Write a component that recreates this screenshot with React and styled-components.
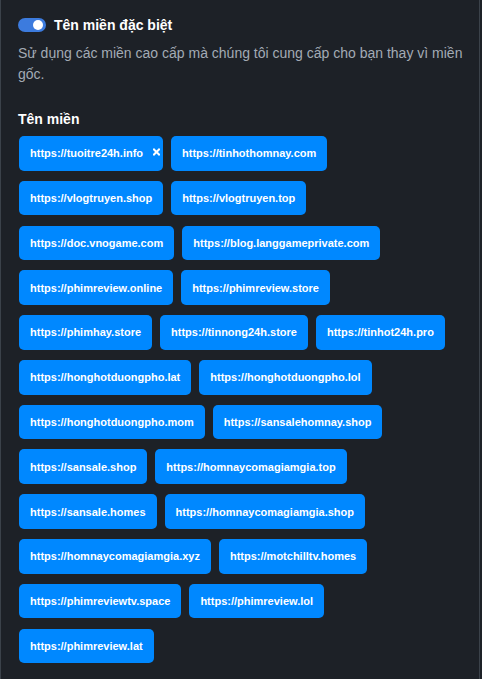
import styled, { createGlobalStyle } from 'styled-components';

const GlobalStyle = createGlobalStyle`
  html, body {
    margin: 0;
    padding: 0;
    background: #1d2127;
  }
  body {
    font-family: 'Liberation Sans', Arial, sans-serif;
  }
`;

const Panel = styled.section`
  box-sizing: border-box;
  width: 480px;
  min-height: 679px;
  padding: 16px 12px 20px 17px;
  background: #1d2127;
  border-left: 1px solid #3b424a;
  border-right: 1px solid #3b424a;
`;

const Header = styled.div`
  display: flex;
  align-items: center;
  gap: 8px;
  height: 18px;
`;

const Toggle = styled.span`
  position: relative;
  display: inline-block;
  width: 28px;
  height: 14px;
  border-radius: 7px;
  background: #3c7bde;
  &::after {
    content: '';
    position: absolute;
    top: 2px;
    right: 3px;
    width: 10px;
    height: 10px;
    border-radius: 50%;
    background: #fff;
  }
`;

const Title = styled.h3`
  margin: 0;
  font-size: 14px;
  font-weight: 700;
  color: #fff;
`;

const Description = styled.p`
  margin: 9px 0 0;
  font-size: 14px;
  line-height: 21px;
  color: #a3abb5;
`;

const Label = styled.h4`
  margin: 24px 0 0;
  font-size: 14px;
  font-weight: 700;
  line-height: 20px;
  color: #fff;
`;

const Chips = styled.div`
  display: flex;
  flex-wrap: wrap;
  gap: 10.2px 8px;
  margin-top: 7px;
  padding-left: 1px;
  max-width: 446px;
`;

const Chip = styled.span`
  position: relative;
  display: inline-flex;
  align-items: center;
  box-sizing: border-box;
  height: 34.6px;
  padding: 0 ${(p) => (p.$removable ? '20px' : '11px')} 0 11px;
  border-radius: 5px;
  background: #0088ff;
  color: #fff;
  font-size: 11px;
  font-weight: 700;
  white-space: nowrap;
`;

const Close = styled.svg`
  position: absolute;
  top: 12px;
  right: 3px;
  width: 7px;
  height: 8px;
`;

const domains = [
  'https://tuoitre24h.info',
  'https://tinhothomnay.com',
  'https://vlogtruyen.shop',
  'https://vlogtruyen.top',
  'https://doc.vnogame.com',
  'https://blog.langgameprivate.com',
  'https://phimreview.online',
  'https://phimreview.store',
  'https://phimhay.store',
  'https://tinnong24h.store',
  'https://tinhot24h.pro',
  'https://honghotduongpho.lat',
  'https://honghotduongpho.lol',
  'https://honghotduongpho.mom',
  'https://sansalehomnay.shop',
  'https://sansale.shop',
  'https://homnaycomagiamgia.top',
  'https://sansale.homes',
  'https://homnaycomagiamgia.shop',
  'https://homnaycomagiamgia.xyz',
  'https://motchilltv.homes',
  'https://phimreviewtv.space',
  'https://phimreview.lol',
  'https://phimreview.lat',
];

const App = () => {
  return (
    <Panel>
      <GlobalStyle />
      <Header>
        <Toggle />
        <Title>Tên miền đặc biệt</Title>
      </Header>
      <Description>
        Sử dụng các miền cao cấp mà chúng tôi cung cấp cho bạn thay vì miền gốc.
      </Description>
      <Label>Tên miền</Label>
      <Chips>
        {domains.map((d, i) => (
          <Chip key={d} $removable={i === 0}>
            {d}
            {i === 0 && (
              <Close viewBox="0 0 7 8">
                <path d="M1 1.5 L6 6.5 M6 1.5 L1 6.5" stroke="#fff" strokeWidth="2" strokeLinecap="square" />
              </Close>
            )}
          </Chip>
        ))}
      </Chips>
    </Panel>
  );
};

export default App;
